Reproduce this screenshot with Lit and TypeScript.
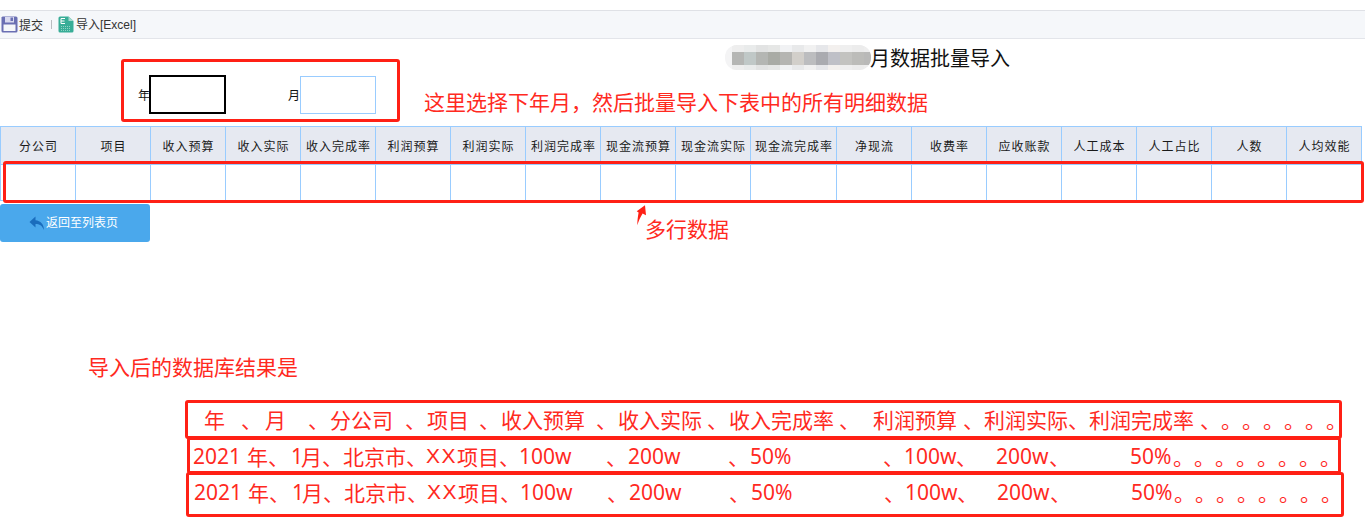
import { LitElement, html, css, svg } from "lit";
import { customElement } from "lit/decorators.js";

const COLS: [string, number][] = [
  ["分公司", 75], ["项目", 75], ["收入预算", 75], ["收入实际", 75], ["收入完成率", 75], ["利润预算", 75],
  ["利润实际", 75], ["利润完成率", 75], ["现金流预算", 75], ["现金流实际", 75], ["现金流完成率", 86], ["净现流", 75],
  ["收费率", 75], ["应收账款", 75], ["人工成本", 75], ["人工占比", 75], ["人数", 75], ["人均效能", 75],
];

type Seg = [number, string];
const dots = (x: number, n: number): Seg[] => Array.from({ length: n }, (_, i) => [x + i * 21, "。"] as Seg);
const HEAD: Seg[] = [
  [204, "年"], [241, "、"], [265, "月"], [308, "、"], [330, "分公司"], [405, "、"], [427, "项目"], [479, "、"],
  [501, "收入预算"], [596, "、"], [618, "收入实际"], [707, "、"], [729, "收入完成率"], [839, "、"], [873, "利润预算"],
  [963, "、"], [984, "利润实际"], [1068, "、"], [1089, "利润完成率"], [1200, "、"], ...dots(1221, 6),
];
const DATA: Seg[] = [
  [193, "2021"], [247, "年、"], [291, "1"], [301, "月、"], [343, "北京市、"], [426, "XX"], [457, "项目、"], [519, "100w"],
  [606, "、"], [628, "200w"], [728, "、"], [750, "50%"], [883, "、"], [904, "100w"], [956, "、"], [996, "200w"],
  [1049, "、"], [1130, "50%"], ...dots(1173, 8),
];

const isLatin = (t: string) => /^[\x00-\x7f]+$/.test(t);

function segs(list: Seg[], start: number, end: number) {
  return list.map(([x, t], i) => {
    const next = i + 1 < list.length ? list[i + 1][0] : end;
    const cls = t === "XX" ? "seg wide" : isLatin(t) ? "seg latin" : "seg";
    return html`<span class=${cls} style="width:${next - x}px;${i === 0 ? `margin-left:${x - start}px` : ""}">${t}</span>`;
  });
}

const DARK = ["#b5b6b4", "#c0c8c7", "#b4b6b3", "#a9aba5", "#b5b5b2", "#d2cfca", "#bcbdbf", "#aaabb0", "#bfc0c7", "#c3c3c0", "#bcbcb9", "#b9b9b8"];
const PALE = ["#eeeeee", "#e9ebeb", "#e2e3e3", "#e6e7e6", "#f1f2f4", "#e8e9ea", "#f1f1f1", "#e6e7ea", "#f3f0ee", "#efefef", "#ececec", "#eeeeee"];

@customElement("app-root")
export class AppRoot extends LitElement {
  static styles = css`
    :host { display: block; position: relative; width: 1365px; height: 532px; overflow: hidden; background: #fff;
      font-family: "Noto Sans CJK SC", "Noto Sans", sans-serif; color: #111; }
    .toolbar { margin-top: 10px; height: 29px; box-sizing: border-box; background: #f5f7fa; border-top: 1px solid #dfe1e6;
      border-bottom: 1px solid #e3e5ea; display: flex; align-items: center; font-size: 12px; color: #333; line-height: 16px; }
    .toolbar svg { display: block; flex: none; }
    .save { margin-left: 1px; margin-right: 1px; }
    .sep { width: 1px; height: 9px; background: #b9bcc0; margin: 0 6px 0 8px; }
    .excel { margin-right: 2px; }
    .tb-latin { font-family: "Liberation Sans", sans-serif; }
    .title { position: relative; z-index: 1; height: 36px; padding-left: 870px; box-sizing: border-box; font-size: 20px; line-height: 38px; color: #111; }
    .form { height: 39px; display: flex; align-items: center; font-size: 12px; padding-left: 138px; }
    .form .lab { width: 12px; line-height: 39px; }
    .in { width: 76px; height: 38px; box-sizing: border-box; background: #fff; }
    .in.black { border: 2px solid #000; height: 39px; width: 77px; margin-left: -1px; }
    .in.blue { border: 1px solid #99ccff; }
    .gap { width: 62px; }
    .table { margin-top: 12px; width: 1362px; border-left: 1px solid #99ccff; border-top: 1px solid #99ccff; box-sizing: border-box; }
    .tr { display: flex; }
    .cell { box-sizing: border-box; border-right: 1px solid #99ccff; border-bottom: 1px solid #99ccff; flex: none; }
    .th { height: 38px; background: #e6e9f1; display: flex; align-items: center; justify-content: center; font-size: 12px;
      letter-spacing: 1px; color: #1a1a1a; white-space: nowrap; padding: 0 0 1px 1px; }
    .td { height: 36px; background: #fff; }
    .btn { margin-top: 3px; width: 150px; height: 38px; background: #4aa8ec; border-radius: 3px; color: #fff; font-size: 12px;
      display: flex; align-items: center; padding: 0 0 4px 29px; box-sizing: border-box; gap: 1px; }
    .btn svg { margin-top: 3px; }
    .note { color: #ff2a1f; font-size: 21px; line-height: 30px; white-space: nowrap; }
    .result-title { margin-top: 109px; padding-left: 88px; height: 30px; }
    .rows { margin-top: 19px; display: flex; flex-direction: column; font-family: "Noto Sans CJK SC", sans-serif; }
    .row { box-sizing: border-box; border: 3px solid #ff2015; border-radius: 3px; display: flex; align-items: center; color: #ff2a1f;
      font-size: 21px; line-height: 30px; white-space: pre; }
    .row1 { margin-left: 185px; width: 1157px; height: 39px; padding-bottom: 2px; }
    .row2 { margin-left: 187px; width: 1154px; height: 37px; margin-top: -2px; }
    .row3 { margin-left: 186px; width: 1158px; height: 45px; margin-top: -2px; padding-bottom: 5px; }
    .seg { display: block; flex: none; overflow: visible; white-space: pre; }
    .latin { font-family: "Noto Sans", sans-serif; }
    .wide { font-family: "Liberation Sans", sans-serif; letter-spacing: 1.5px; }
    .box { position: absolute; box-sizing: border-box; border: 3px solid #ff2015; border-radius: 3px; pointer-events: none; }
    .box-form { left: 121px; top: 59px; width: 279px; height: 63px; }
    .box-row { left: 3px; top: 161px; width: 1361px; height: 42px; }
    .note-abs { position: absolute; }
    .n1 { left: 424px; top: 86px; }
    .n2 { left: 645px; top: 213px; }
    .arrow { position: absolute; left: 634px; top: 205px; }
    .mask { position: absolute; left: 725px; top: 45px; width: 146px; height: 25px; padding-left: 7px; background: #f4f4f5; border-radius: 12px;
      display: flex; box-sizing: border-box; overflow: hidden; filter: blur(0.4px); }
    .mosaic { width: 12px; flex: none; display: flex; flex-direction: column; }
    .mosaic i { display: block; }
    .mosaic .p1 { height: 7px; }
    .mosaic .d { height: 13px; }
    .mosaic .p2 { height: 5px; }
  `;

  render() {
    return html`
      <div class="toolbar">
        <svg class="save" width="17" height="17" viewBox="0 0 17 17">
          <path d="M1.5 0.5H15a1.5 1.5 0 0 1 1.5 1.5V15a1.5 1.5 0 0 1-1.5 1.5H2A1.5 1.5 0 0 1 .5 15V1.5z" fill="#6a6fb3"/>
          <rect x="2.5" y="8.5" width="12" height="6.5" fill="#f5f7fa"/>
          <rect x="4" y="1" width="9" height="5.5" fill="#d9daf0"/>
          <rect x="9.5" y="1.5" width="2.5" height="3.5" fill="#6a6fb3"/>
        </svg>
        <span>提交</span>
        <span class="sep"></span>
        <svg class="excel" width="16" height="17" viewBox="0 0 16 17">
          <path d="M2 0.5H10.5L15.5 5V15a1.5 1.5 0 0 1-1.5 1.5H2A1.5 1.5 0 0 1 .5 15V2A1.5 1.5 0 0 1 2 .5z" fill="#38ad97"/>
          <path d="M10.5 .5V5H15.5z" fill="#a6dacf"/>
          <path d="M7 2.5H3V7.5H7M3 5H6.5" fill="none" stroke="#fff" stroke-width="1"/>
          <path d="M3 10.5H13M3 12.5H13M3 14.5H13" stroke="#8fd2c3" stroke-width="1" stroke-dasharray="1 1"/>
        </svg>
        <span>导入<span class="tb-latin">[Excel]</span></span>
      </div>
      <div class="title">月数据批量导入</div>
      <div class="form">
        <span class="lab">年</span><div class="in black"></div>
        <div class="gap"></div>
        <span class="lab">月</span><div class="in blue"></div>
      </div>
      <div class="table">
        <div class="tr">${COLS.map(([t, w]) => html`<div class="cell th" style="width:${w}px">${t}</div>`)}</div>
        <div class="tr">${COLS.map(([, w]) => html`<div class="cell td" style="width:${w}px"></div>`)}</div>
      </div>
      <div class="btn">
        <svg width="16" height="16" viewBox="0 0 16 16"><path d="M6.5 1.5L0.5 7L6.5 12.5V9C10.5 9 13 10.5 15 15C15 9.5 11.5 5.5 6.5 5.2z" fill="#1a6dbd"/></svg>
        <span>返回至列表页</span>
      </div>
      <div class="note result-title">导入后的数据库结果是</div>
      <div class="rows">
        <div class="row row1">${segs(HEAD, 188, 1338)}</div>
        <div class="row row2">${segs(DATA, 190, 1338)}</div>
        <div class="row row3">${segs(DATA.map(([x, t]) => [x + 1, t] as Seg), 189, 1341)}</div>
      </div>

      <div class="mask">${DARK.map((c, i) => html`<div class="mosaic">
        <i class="p1" style="background:${PALE[i]}"></i><i class="d" style="background:${c}"></i><i class="p2" style="background:${PALE[i]}"></i>
      </div>`)}</div>
      <div class="box box-form"></div>
      <div class="note note-abs n1">这里选择下年月，然后批量导入下表中的所有明细数据</div>
      <div class="box box-row"></div>
      <svg class="arrow" width="16" height="24" viewBox="0 0 16 24">${svg`<path d="M11 .3L2.7 6.3L4.6 7.5C3.8 12 3.3 16 3.3 20.3C4.5 16 6.5 12 8.6 8.5L12 10.3z" fill="#ff2015"/>`}</svg>
      <div class="note note-abs n2">多行数据</div>
    `;
  }
}
